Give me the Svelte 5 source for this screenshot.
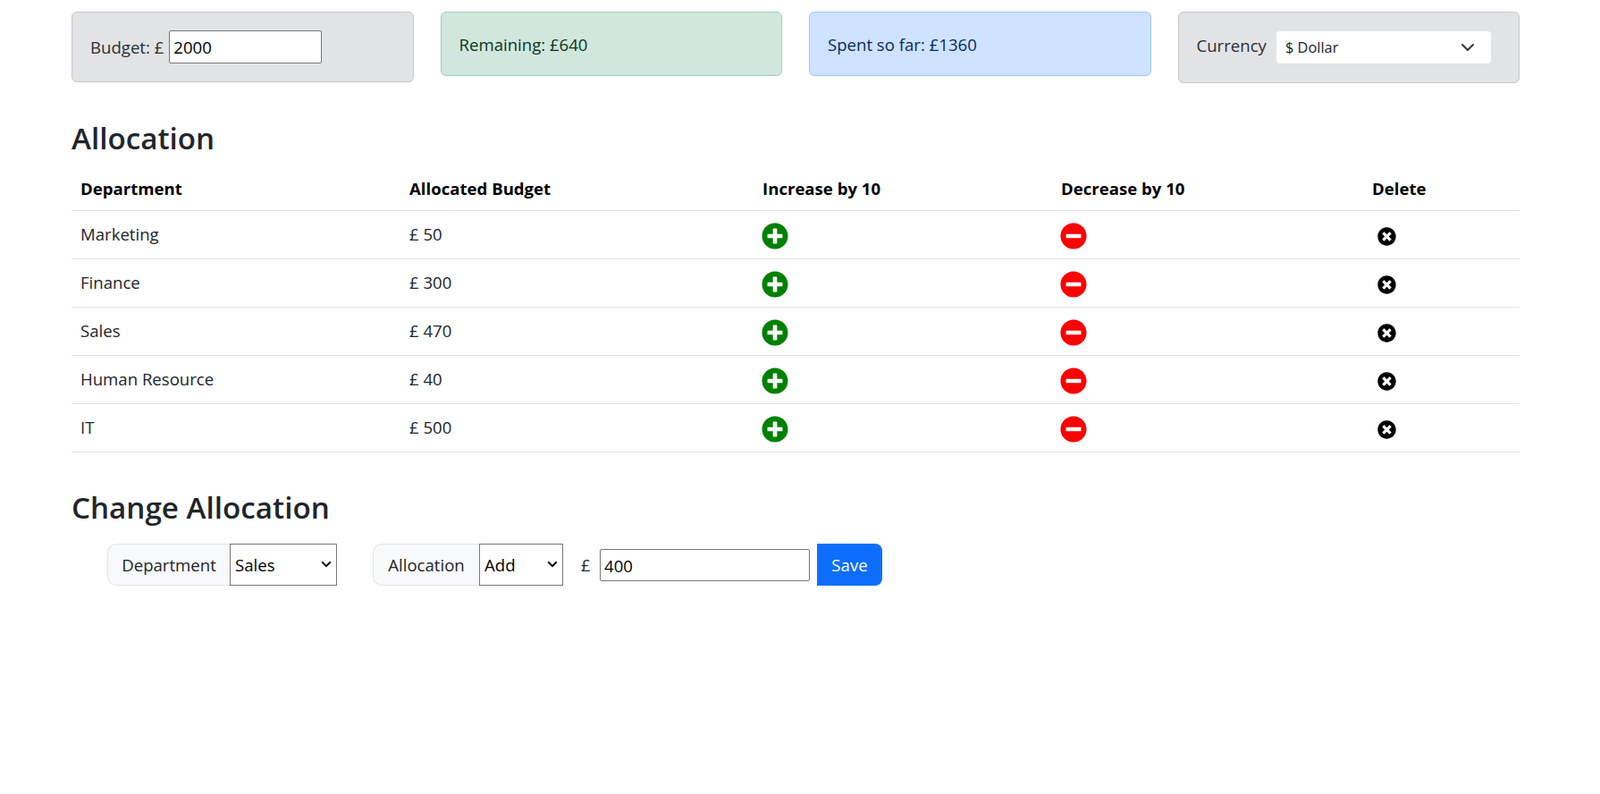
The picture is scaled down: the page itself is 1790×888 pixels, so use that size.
<script lang="ts">
	const departments = [
		{ name: 'Marketing', budget: 50 },
		{ name: 'Finance', budget: 300 },
		{ name: 'Sales', budget: 470 },
		{ name: 'Human Resource', budget: 40 },
		{ name: 'IT', budget: 500 }
	];

	const plusPath =
		'M256 8C119 8 8 119 8 256s111 248 248 248 248-111 248-248S393 8 256 8zm144 276c0 6.6-5.4 12-12 12h-92v92c0 6.6-5.4 12-12 12h-56c-6.6 0-12-5.4-12-12v-92h-92c-6.6 0-12-5.4-12-12v-56c0-6.6 5.4-12 12-12h92v-92c0-6.6 5.4-12 12-12h56c6.6 0 12 5.4 12 12v92h92c6.6 0 12 5.4 12 12v56z';
	const minusPath =
		'M256 8C119 8 8 119 8 256s111 248 248 248 248-111 248-248S393 8 256 8zM124 296c-6.6 0-12-5.4-12-12v-56c0-6.6 5.4-12 12-12h264c6.6 0 12 5.4 12 12v56c0 6.6-5.4 12-12 12H124z';
	const timesPath =
		'M256 8C119 8 8 119 8 256s111 248 248 248 248-111 248-248S393 8 256 8zm121.6 313.1c4.7 4.7 4.7 12.3 0 17L338 377.6c-4.7 4.7-12.3 4.7-17 0L256 312l-65.1 65.6c-4.7 4.7-12.3 4.7-17 0L134.4 338c-4.7-4.7-4.7-12.3 0-17l65.6-65-65.6-65.1c-4.7-4.7-4.7-12.3 0-17l39.6-39.6c4.7-4.7 12.3-4.7 17 0l65 65.7 65.1-65.6c4.7-4.7 12.3-4.7 17 0l39.6 39.6c4.7 4.7 4.7 12.3 0 17L312 256l65.6 65.1z';
</script>

<div class="container">
	<div class="alerts">
		<div class="alert grey budget">
			<span>Budget: £</span>
			<input class="budget-input" type="number" value="2000" />
		</div>
		<div class="alert green">Remaining: £640</div>
		<div class="alert blue">Spent so far: £1360</div>
		<div class="alert grey currency">
			<span class="currency-label">Currency</span>
			<div class="fake-select">
				<span>$ Dollar</span>
				<svg width="16" height="16" viewBox="0 0 16 16" aria-hidden="true">
					<path d="M2 5l6 6 6-6" fill="none" stroke="#343a40" stroke-width="2" stroke-linecap="round" stroke-linejoin="round" />
				</svg>
			</div>
		</div>
	</div>

	<h3 class="title-allocation">Allocation</h3>

	<table>
		<thead>
			<tr>
				<th class="c1">Department</th>
				<th class="c2">Allocated Budget</th>
				<th class="c3">Increase by 10</th>
				<th class="c4">Decrease by 10</th>
				<th>Delete</th>
			</tr>
		</thead>
		<tbody>
			{#each departments as dept}
				<tr>
					<td>{dept.name}</td>
					<td>£ {dept.budget}</td>
					<td>
						<svg class="icon big" viewBox="0 0 512 512" fill="green" aria-hidden="true"><path d={plusPath} /></svg>
					</td>
					<td>
						<svg class="icon big" viewBox="0 0 512 512" fill="red" aria-hidden="true"><path d={minusPath} /></svg>
					</td>
					<td>
						<svg class="icon small" viewBox="0 0 512 512" fill="black" aria-hidden="true"><path d={timesPath} /></svg>
					</td>
				</tr>
			{/each}
		</tbody>
	</table>

	<h3 class="title-change">Change Allocation</h3>

	<div class="change-row">
		<label class="addon dept-label" for="dept">Department</label>
		<select id="dept" class="dept-select">
			<option>Sales</option>
			<option>Marketing</option>
			<option>Finance</option>
			<option>Human Resource</option>
			<option>IT</option>
		</select>
		<label class="addon alloc-label" for="mode">Allocation</label>
		<select id="mode" class="mode-select">
			<option>Add</option>
			<option>Reduce</option>
		</select>
		<span class="pound">£</span>
		<input class="amount" type="number" value="400" />
		<button class="save">Save</button>
	</div>
</div>

<style>
	:global(body) {
		margin: 0;
		background: #fff;
		color: #212529;
		font-family: 'Open Sans', 'Noto Sans', sans-serif;
		font-size: 18.6px;
		line-height: 1.5;
	}

	.container {
		width: 1620px;
		margin-left: 80px;
		padding-top: 13px;
	}

	.alerts {
		display: grid;
		grid-template-columns: repeat(4, 1fr);
		gap: 30px;
		align-items: start;
	}

	.alert {
		box-sizing: border-box;
		height: 72px;
		padding: 0 20px;
		border: 1px solid transparent;
		border-radius: 6px;
		display: flex;
		align-items: center;
	}

	.grey {
		background: #e2e3e5;
		border-color: #c4c8cb;
		color: #2b2f32;
	}

	.green {
		background: #d1e7dd;
		border-color: #a3cfbb;
		color: #0a3622;
		padding-top: 2px;
	}

	.blue {
		background: #cfe2ff;
		border-color: #9ec5fe;
		color: #052c65;
		padding-top: 2px;
	}

	.budget {
		height: 79px;
		gap: 6px;
	}

	.budget-input {
		box-sizing: border-box;
		width: 171px;
		height: 37px;
		padding: 1px 4px;
		border: 1px solid #767676;
		border-radius: 2px;
		font: inherit;
		color: #000;
		background: #fff;
		outline: 0;
	}

	.currency {
		height: 80px;
		gap: 11px;
	}

	.currency-label {
		margin-bottom: 5px;
	}

	.fake-select {
		box-sizing: border-box;
		width: 240px;
		height: 36px;
		margin-bottom: 1px;
		padding: 2px 18px 0 10px;
		background: #fff;
		border-radius: 4px;
		display: flex;
		align-items: center;
		justify-content: space-between;
		color: #212529;
		font-size: 16.4px;
	}

	.fake-select svg {
		margin-top: -2px;
	}

	h3 {
		margin: 0;
		font-size: 33.2px;
		font-weight: 600;
		line-height: 1.2;
	}

	.title-allocation {
		margin-top: 42px;
	}

	table {
		width: 100%;
		margin-top: 12px;
		border-collapse: collapse;
		table-layout: fixed;
		color: #000;
	}

	th {
		height: 48px;
		padding: 0 0 0 10px;
		text-align: left;
		font-weight: 700;
		border-bottom: 1px solid #dee2e6;
	}

	.c1 {
		width: 358px;
	}

	.c2 {
		width: 385px;
	}

	.c3 {
		width: 324px;
	}

	.c4 {
		width: 338px;
	}

	td {
		height: 53px;
		padding: 0 0 0 10px;
		border-bottom: 1px solid #dee2e6;
		color: #212529;
	}

	.icon {
		display: block;
	}

	.big {
		width: 30px;
		height: 30px;
		margin-left: -1px;
		margin-top: 4px;
	}

	.small {
		width: 21px;
		height: 21px;
		margin-left: 6px;
		margin-top: 4px;
	}

	.title-change {
		margin-top: 42px;
	}

	.change-row {
		display: flex;
		align-items: center;
		margin-top: 20px;
		margin-left: 40px;
	}

	.addon {
		box-sizing: border-box;
		height: 47px;
		padding-top: 2px;
		display: flex;
		align-items: center;
		justify-content: center;
		background: #f8f9fa;
		border: 1px solid #e2e5e9;
		border-right: 0;
		border-radius: 10px 0 0 10px;
	}

	.dept-label {
		width: 137px;
	}

	.alloc-label {
		width: 119px;
		margin-left: 40px;
	}

	select {
		box-sizing: border-box;
		height: 47px;
		border: 1px solid #767676;
		font: inherit;
		color: #000;
		padding: 2px 0 0 5px;
		border-radius: 0;
		appearance: none;
		background: #fff url("data:image/svg+xml,%3Csvg xmlns='http://www.w3.org/2000/svg' width='12' height='8' viewBox='0 0 12 8'%3E%3Cpath d='M1.2 1.4L6 6.2l4.8-4.8' fill='none' stroke='%23000' stroke-width='2'/%3E%3C/svg%3E") no-repeat right 5px center;
	}

	.dept-select {
		width: 120px;
	}

	.mode-select {
		width: 94px;
	}

	.pound {
		margin-left: 20px;
		padding-top: 2px;
		width: 21px;
		color: #212529;
	}

	.amount {
		box-sizing: border-box;
		width: 235px;
		height: 36px;
		margin-top: 2px;
		padding: 1px 4px;
		border: 1px solid #767676;
		border-radius: 2px;
		font: inherit;
		color: #000;
		outline: 0;
	}

	.save {
		box-sizing: border-box;
		width: 73px;
		height: 47px;
		margin-left: 8px;
		padding-top: 2px;
		background: #0d6efd;
		color: #fff;
		border: 0;
		border-radius: 0 8px 8px 0;
		font: inherit;
	}
</style>
